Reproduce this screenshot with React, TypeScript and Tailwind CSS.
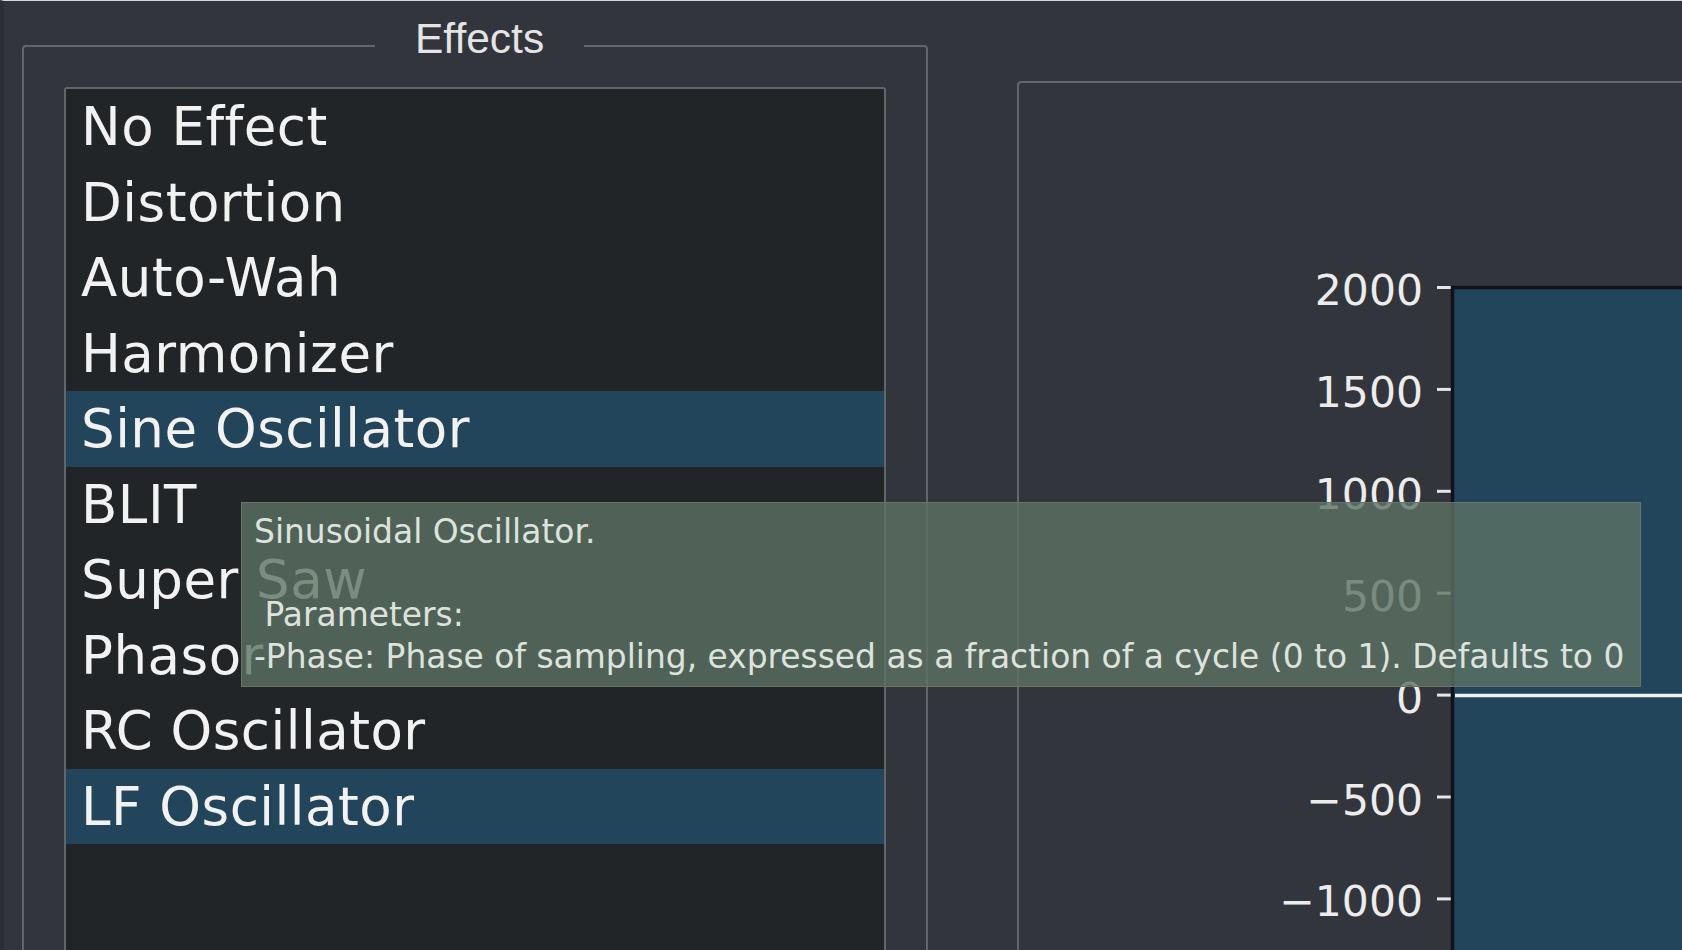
import React from 'react';

const effects = [
  'No Effect',
  'Distortion',
  'Auto-Wah',
  'Harmonizer',
  'Sine Oscillator',
  'BLIT',
  'Super Saw',
  'Phasor',
  'RC Oscillator',
  'LF Oscillator',
];

const selected = new Set([4, 9]);

// y-axis ticks, page coords offset by the plot panel content origin
const ticks = [
  { label: '2000', y: 204.5 },
  { label: '1500', y: 306.4 },
  { label: '1000', y: 408.3 },
  { label: '500', y: 510.2 },
  { label: '0', y: 612.1 },
  { label: '\u2212500', y: 714 },
  { label: '\u22121000', y: 815.9 },
];

function EffectsGroup() {
  return (
    <div className="relative ml-[18px] mt-[44px] h-[940px] w-[906px] shrink-0 rounded-[4px] border-2 border-[#62666b] px-[40px] pt-[40px]">
      {/* group title sits on the top border */}
      <div className="absolute left-[351px] top-[-32px] h-[47px] bg-[#32353b] pl-[40px] pr-[40px] font-['Liberation_Sans',Arial,sans-serif] text-[42.5px] leading-[47px] text-[#e4e4e4]">
        Effects
      </div>
      <div className="h-[900px] w-[822px] rounded-[3px] border-2 border-[#62666b] bg-[#222528]">
        {effects.map((name, i) => (
          <div
            key={name}
            className={`h-[75.5px] pl-[15px] text-[53px] leading-[75.5px] tracking-[0.5px] whitespace-nowrap text-[#f2f2f2] ${
              selected.has(i) ? 'bg-[#22455b]' : ''
            }`}
          >
            {name}
          </div>
        ))}
      </div>
    </div>
  );
}

function PlotGroup() {
  return (
    <div className="ml-[89px] mt-[80px] h-[900px] w-[700px] shrink-0 rounded-tl-[4px] border-2 border-[#62666b]">
      <svg width="680" height="880" className="block">
        <rect x="433" y="204" width="260" height="700" fill="#22455b" />
        {ticks.map((t) => (
          <g key={t.label}>
            <text
              x="404"
              y={t.y + 17.5}
              textAnchor="end"
              fontFamily="'DejaVu Sans', sans-serif"
              fontSize="42.5"
              fill="#ececec"
            >
              {t.label}
            </text>
            <line x1="418" x2="432" y1={t.y} y2={t.y} stroke="#e6e6e6" strokeWidth="3" />
          </g>
        ))}
        {/* axes frame */}
        <line x1="433.5" x2="433.5" y1="203" y2="880" stroke="#0f1216" strokeWidth="3.5" />
        <line x1="432" x2="680" y1="204.5" y2="204.5" stroke="#0f1216" strokeWidth="3.5" />
        {/* zero line */}
        <line x1="436" x2="680" y1="612.5" y2="612.5" stroke="#f0f0f0" strokeWidth="3.5" />
      </svg>
    </div>
  );
}

function Tooltip() {
  return (
    <div className="absolute left-[237px] top-[501px] h-[185px] w-[1400px] border border-[#68736c] bg-[rgba(93,114,100,0.8)] pl-[12px] pt-[8px] text-[32.9px] leading-[41.5px] whitespace-pre text-[#dde2dd]">
      <div>Sinusoidal Oscillator.</div>
      <div>&nbsp;</div>
      <div> Parameters:</div>
      <div>-Phase: Phase of sampling, expressed as a fraction of a cycle (0 to 1). Defaults to 0</div>
    </div>
  );
}

export default function App() {
  return (
    <div className="relative flex h-[950px] w-[1682px] items-start overflow-hidden border-t border-l-4 border-t-[#d6d6d6] border-l-[#2b2e33] bg-[#32353b] font-['DejaVu_Sans',sans-serif]">
      <EffectsGroup />
      <PlotGroup />
      <Tooltip />
    </div>
  );
}
